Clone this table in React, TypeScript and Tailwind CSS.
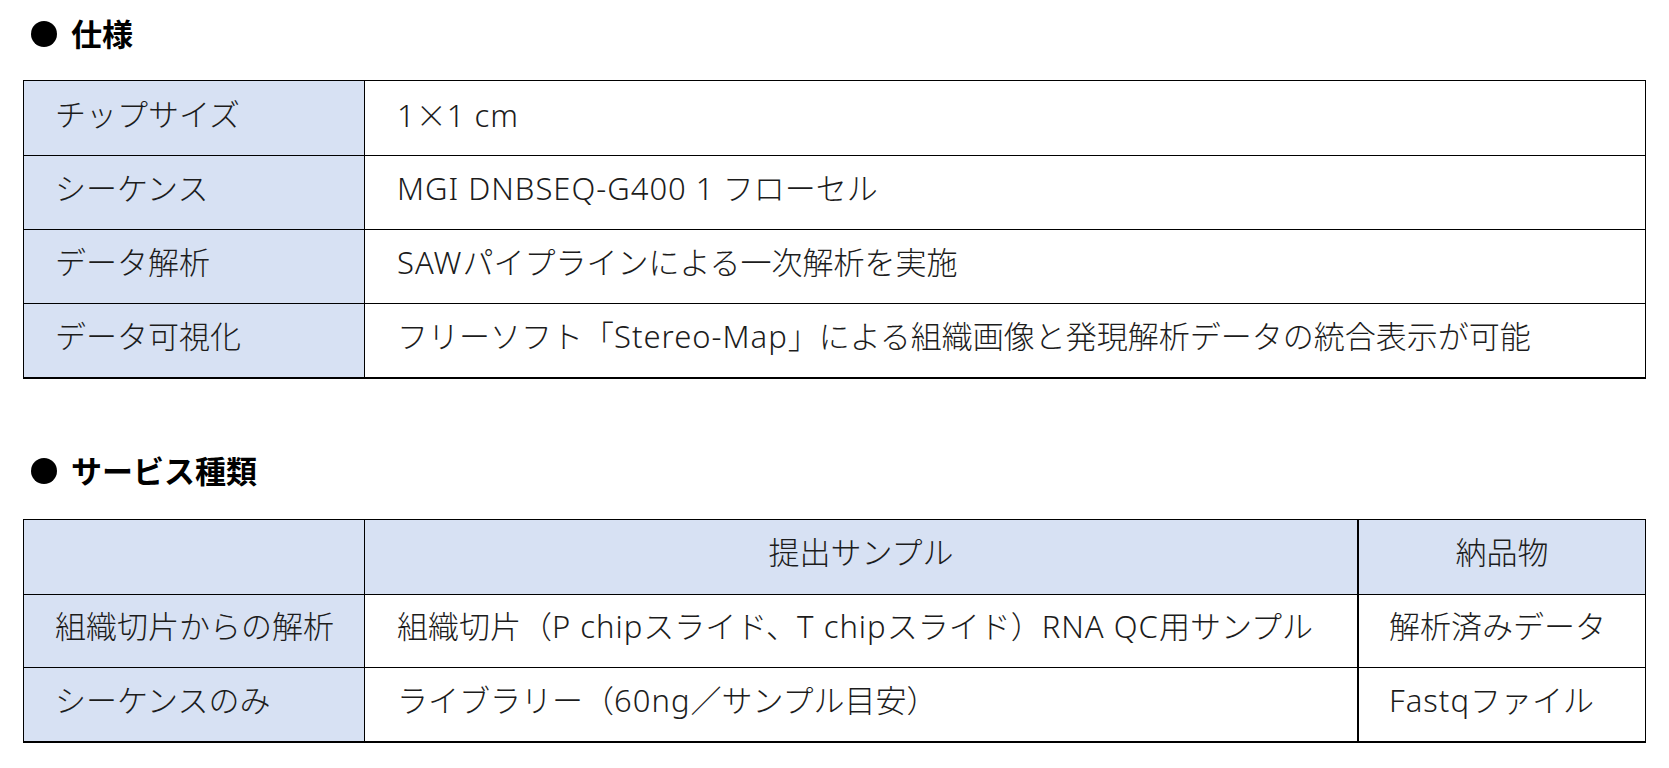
import React from "react";

const font = { fontFamily: '"Noto Sans", "Noto Sans CJK JP", sans-serif' };
const cjk = { fontFamily: '"Noto Sans CJK JP", sans-serif' };

function T({ s }: { s: string }) {
  const parts = s.split(/([A-Za-z0-9][A-Za-z0-9\- ]*[A-Za-z0-9]|[A-Za-z0-9]|×)/);
  return (
    <>
      {parts.map((p, i) => {
        if (!p) return null;
        if (p === "×") {
          return (
            <span key={i} style={cjk}>
              ×
            </span>
          );
        }
        if (/^[A-Za-z0-9]/.test(p)) {
          return (
            <span key={i} className="tracking-[1px]">
              {p}
            </span>
          );
        }
        return <React.Fragment key={i}>{p}</React.Fragment>;
      })}
    </>
  );
}

function Heading({ children }: { children: React.ReactNode }) {
  return (
    <div className="flex h-[50px] items-center pl-[8px]">
      <span className="inline-block h-[26px] w-[26px] rounded-full bg-black" />
      <span className="ml-[14px] pb-[4px] text-[31px] font-bold leading-none text-black" style={cjk}>
        {children}
      </span>
    </div>
  );
}

const spec: [string, string][] = [
  ["チップサイズ", "1×1 cm"],
  ["シーケンス", "MGI DNBSEQ-G400 1 フローセル"],
  ["データ解析", "SAWパイプラインによる一次解析を実施"],
  ["データ可視化", "フリーソフト「Stereo-Map」による組織画像と発現解析データの統合表示が可能"],
];

const services: [string, string, string][] = [
  ["組織切片からの解析", "組織切片（P chipスライド、T chipスライド）RNA QC用サンプル", "解析済みデータ"],
  ["シーケンスのみ", "ライブラリー（60ng／サンプル目安）", "Fastqファイル"],
];

export default function App() {
  return (
    <div
      className="min-h-[768px] w-[1669px] bg-white pl-[23px] pt-[9px] text-[31px] font-light text-[#1c1c1c]"
      style={font}
    >
      <Heading>仕様</Heading>

      <div className="mt-[21px] grid h-[299px] w-[1623px] grid-rows-4 border-x border-t border-b-2 border-black">
        {spec.map(([k, v], i) => (
          <div
            key={k}
            className={`grid grid-cols-[340px_1fr] ${i > 0 ? "border-t border-black" : ""}`}
          >
            <div className="flex items-center bg-[#d7e1f3] pb-[8px] pl-[31px] leading-none">{k}</div>
            <div className="flex items-center border-l border-black pb-[8px] pl-[32px] leading-none">
              <span>
                <T s={v} />
              </span>
            </div>
          </div>
        ))}
      </div>

      <div className="mt-[67px]">
        <Heading>サービス種類</Heading>
      </div>

      <div className="mt-[23px] grid h-[224px] w-[1623px] grid-rows-3 border-x border-t border-b-2 border-black">
        <div className="grid grid-cols-[340px_993px_1fr] bg-[#d7e1f3]">
          <div />
          <div className="flex items-center justify-center border-l border-black pb-[8px] leading-none">
            提出サンプル
          </div>
          <div className="flex items-center justify-center border-l-2 border-black pb-[8px] leading-none">
            納品物
          </div>
        </div>
        {services.map(([a, b, c]) => (
          <div key={a} className="grid grid-cols-[340px_993px_1fr] border-t border-black">
            <div className="flex items-center bg-[#d7e1f3] pb-[8px] pl-[31px] leading-none">{a}</div>
            <div className="flex items-center border-l border-black pb-[8px] pl-[32px] leading-none">
              <span>
                <T s={b} />
              </span>
            </div>
            <div className="flex items-center border-l-2 border-black pb-[8px] pl-[30px] leading-none">
              <span>
                <T s={c} />
              </span>
            </div>
          </div>
        ))}
      </div>
    </div>
  );
}
